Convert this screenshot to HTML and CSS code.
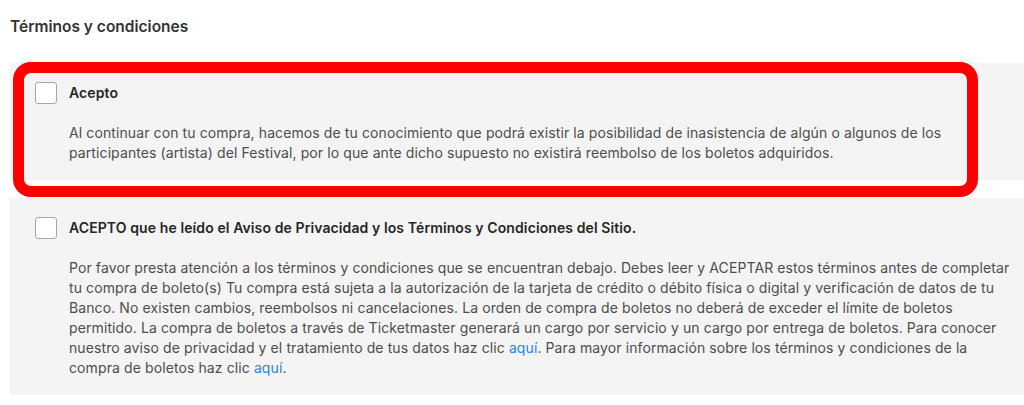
FILE: index.html
```html
<!DOCTYPE html>
<html lang="es">
<head>
  <meta charset="UTF-8">
  <meta name="viewport" content="width=device-width, initial-scale=1.0">
  <title>Términos y condiciones</title>
  <link rel="stylesheet" href="styles.css">
</head>
<body>
  <div class="terms">
    <h2>Términos y condiciones</h2>

    <div class="highlight">
      <div class="term-card">
        <label class="term-head">
          <input type="checkbox" name="acepto_festival">
          <span class="box"></span>
          <span class="term-title">Acepto</span>
        </label>
        <p class="term-text">Al continuar con tu compra, hacemos de tu conocimiento que podrá existir la posibilidad de inasistencia de algún o algunos de los participantes (artista) del Festival, por lo que ante dicho supuesto no existirá reembolso de los boletos adquiridos.</p>
      </div>
      <div class="red-frame"></div>
    </div>

    <div class="term-card">
      <label class="term-head">
        <input type="checkbox" name="acepto_sitio">
        <span class="box"></span>
        <span class="term-title">ACEPTO que he leído el Aviso de Privacidad y los Términos y Condiciones del Sitio.</span>
      </label>
      <p class="term-text">Por favor presta atención a los términos y condiciones que se encuentran debajo. Debes leer y ACEPTAR estos términos antes de completar tu compra de boleto(s) Tu compra está sujeta a la autorización de la tarjeta de crédito o débito física o digital y verificación de datos de tu Banco. No existen cambios, reembolsos ni cancelaciones. La orden de compra de boletos no deberá de exceder el límite de boletos permitido. La compra de boletos a través de Ticketmaster generará un cargo por servicio y un cargo por entrega de boletos. Para conocer nuestro aviso de privacidad y el tratamiento de tus datos haz clic <a href="#">aquí</a>. Para mayor información sobre los términos y condiciones de la compra de boletos haz clic <a href="#">aquí</a>.</p>
    </div>
  </div>
</body>
</html>
```

FILE: styles.css
```css
* {
  margin: 0;
  padding: 0;
  box-sizing: border-box;
}

body {
  font-family: Inter, "Noto Sans", sans-serif;
  background-color: #ffffff;
  color: #4d4d4d;
}

.terms {
  padding: 17px 0 0 10px;
}

h2 {
  font-size: 15.5px;
  line-height: 20px;
  font-weight: 600;
  color: #333;
  margin-bottom: 26px;
}

.highlight {
  position: relative;
  margin-bottom: 18px;
}

/* annotation drawn over the first card */
.red-frame {
  position: absolute;
  top: -1px;
  left: 3px;
  width: 965px;
  height: 135px;
  border: 11px solid #ff0000;
  border-radius: 18px;
  pointer-events: none;
}

.term-card {
  background-color: #f4f4f4;
  padding: 19px 0 17px 25px;
}

.term-head {
  display: flex;
  align-items: center;
  gap: 12px;
  cursor: pointer;
}

.term-head input {
  display: none;
}

.box {
  width: 22px;
  height: 22px;
  flex-shrink: 0;
  background-color: #fff;
  border: 1px solid #a6a6a6;
  border-radius: 3px;
}

.term-title {
  font-size: 14px;
  line-height: 22px;
  font-weight: 600;
  letter-spacing: 0.1px;
  color: #262626;
}

.term-text {
  margin: 19px 0 0 34px;
  max-width: 950px;
  font-size: 14px;
  line-height: 20px;
  letter-spacing: 0.1px;
}

.term-text a {
  color: #2b86de;
  text-decoration: none;
}
```
